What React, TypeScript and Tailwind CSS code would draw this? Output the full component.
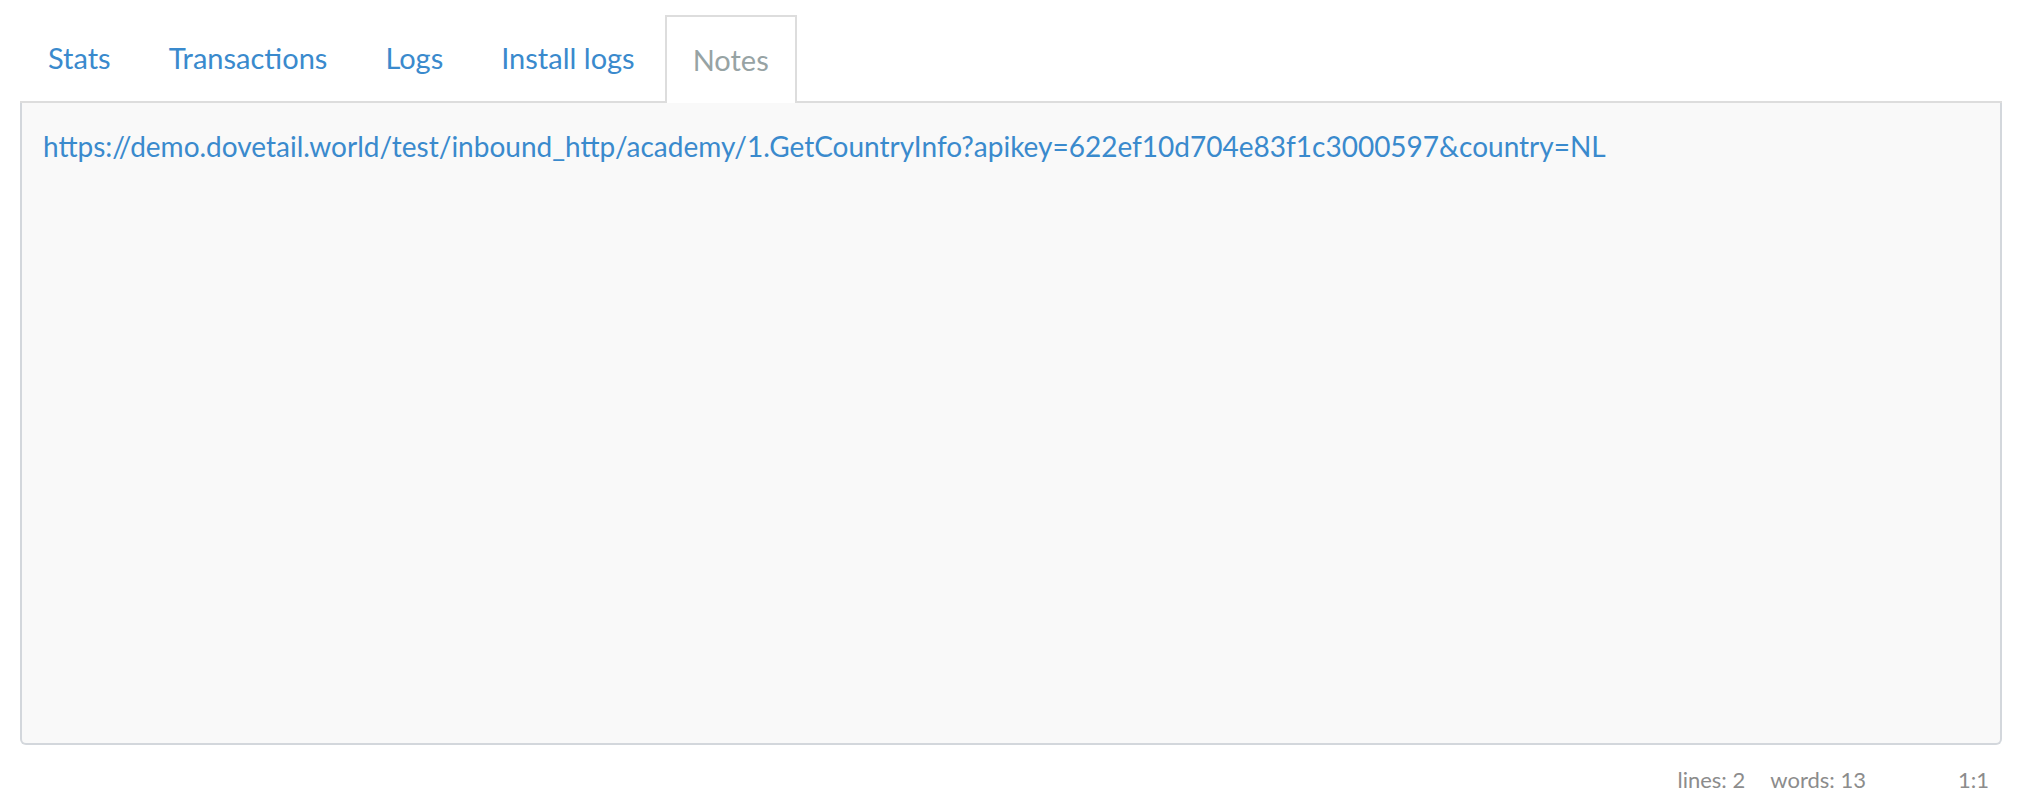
import React from 'react';

const tabs = ['Stats', 'Transactions', 'Logs', 'Install logs', 'Notes'];

export default function App() {
  const active = 'Notes';
  const url =
    'https://demo.dovetail.world/test/inbound_http/academy/1.GetCountryInfo?apikey=622ef10d704e83f1c3000597&country=NL';

  return (
    <div className="min-h-[807px] bg-white px-[20px] pt-[15px] font-['Lato',sans-serif]">
      <nav className="flex border-b-2 border-[#dddddd]">
        {tabs.map((t) =>
          t === active ? (
            <div
              key={t}
              className="mr-[2px] -mb-[2px] flex h-[88px] items-center border-2 border-b-0 border-[#dddddd] bg-white px-[26px] text-[29px] text-[#97a3a4]"
            >
              {t}
            </div>
          ) : (
            <a
              key={t}
              href="#"
              className="mr-[2px] flex h-[86px] items-center border-2 border-transparent px-[26px] text-[29px] text-[#3a8acd]"
            >
              {t}
            </a>
          )
        )}
      </nav>
      <div className="h-[642px] rounded-b-[6px] border-2 border-t-0 border-[#d3d7dc] bg-[#f9f9f9] px-[21px] pt-[23px]">
        <p className="text-[28px] leading-[40px] text-[#3a8acd]">{url}</p>
        <p className="h-[40px]" />
      </div>
      <div className="flex justify-end pt-[18px] pr-[13px] text-[22px] text-[#8c8c8c]">
        <span>lines: 2</span>
        <span className="ml-[25px]">words: 13</span>
        <span className="ml-[92px]">1:1</span>
      </div>
    </div>
  );
}
